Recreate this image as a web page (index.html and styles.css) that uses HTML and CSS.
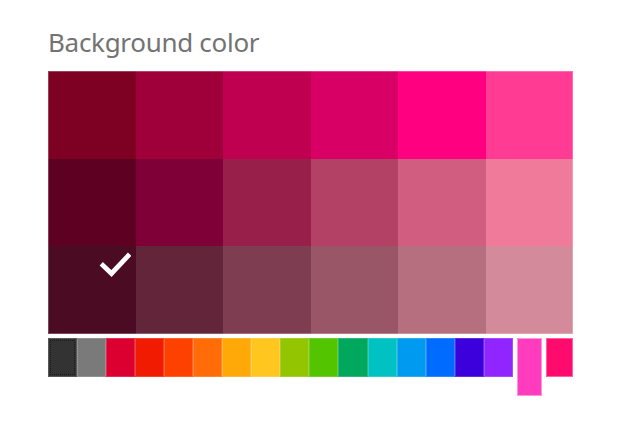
FILE: index.html
```html
<!DOCTYPE html>
<html>
<head>
<meta charset="utf-8">
<link rel="stylesheet" href="styles.css">
</head>
<body>
<div class="panel">
  <div class="title">Background color</div>
  <div class="grid">
    <div class="cell" style="background:#7e0022"></div>
    <div class="cell" style="background:#a0003a"></div>
    <div class="cell" style="background:#bf0050"></div>
    <div class="cell" style="background:#d90065"></div>
    <div class="cell" style="background:#ff0080"></div>
    <div class="cell" style="background:#ff3b93"></div>
    <div class="cell" style="background:#5e0021"></div>
    <div class="cell" style="background:#7e0037"></div>
    <div class="cell" style="background:#991f4b"></div>
    <div class="cell" style="background:#b34065"></div>
    <div class="cell" style="background:#d15e80"></div>
    <div class="cell" style="background:#ef7a9a"></div>
    <div class="cell selected" style="background:#4b0b23">
      <svg class="check" width="32" height="26" viewBox="0 0 32 26"><path d="M4 13.5 L12.5 21.5 L29 4" fill="none" stroke="#fff" stroke-width="4.8" stroke-linecap="square" stroke-linejoin="miter"/></svg>
    </div>
    <div class="cell" style="background:#63253a"></div>
    <div class="cell" style="background:#7f3d51"></div>
    <div class="cell" style="background:#985667"></div>
    <div class="cell" style="background:#b56f7f"></div>
    <div class="cell" style="background:#d38a9b"></div>
  </div>
  <div class="strip">
    <div class="sw focus" style="background:#333333"></div>
    <div class="sw" style="background:#7a7a7a"></div>
    <div class="sw" style="background:#db0030"></div>
    <div class="sw" style="background:#f01b00"></div>
    <div class="sw" style="background:#ff4100"></div>
    <div class="sw" style="background:#ff6c08"></div>
    <div class="sw" style="background:#ffa908"></div>
    <div class="sw" style="background:#ffc61f"></div>
    <div class="sw" style="background:#93c500"></div>
    <div class="sw" style="background:#52c400"></div>
    <div class="sw" style="background:#00a85e"></div>
    <div class="sw" style="background:#00c2c2"></div>
    <div class="sw" style="background:#009bf0"></div>
    <div class="sw" style="background:#006cff"></div>
    <div class="sw" style="background:#3c00dc"></div>
    <div class="sw" style="background:#9125ff"></div>
    <div class="sw active" style="background:#ff3cbe"></div>
    <div class="sw last" style="background:#ff0a6d"></div>
  </div>
</div>
</body>
</html>
```
FILE: styles.css
```css
html, body {
  margin: 0;
  padding: 0;
  background: #ffffff;
}
.panel {
  padding: 26px 0 0 48px;
  width: 525px;
}
.title {
  font-family: "Noto Sans", "Open Sans", sans-serif;
  font-size: 26px;
  line-height: 32px;
  color: #737373;
  height: 32px;
  margin-bottom: 13px;
  letter-spacing: -0.3px;
}
.grid {
  position: relative;
  display: grid;
  grid-template-columns: repeat(6, 1fr);
  grid-template-rows: repeat(3, 1fr);
  width: 525px;
  height: 263px;
}
.grid::after {
  content: "";
  position: absolute;
  inset: 0;
  border: 1px solid rgba(255, 255, 255, 0.25);
  pointer-events: none;
}
.cell {
  position: relative;
}
.check {
  position: absolute;
  left: 51px;
  top: 6px;
}
.strip {
  display: flex;
  align-items: flex-start;
  margin-top: 4px;
  width: 525px;
}
.sw {
  width: 29.06px;
  height: 39px;
  flex: none;
  box-sizing: border-box;
  border: 1px solid rgba(255, 255, 255, 0.18);
}
.sw.focus {
  outline: 1px dotted #1a1a1a;
  outline-offset: -3px;
}
.sw.active {
  width: 25.5px;
  height: 58px;
  margin: 0 4px 0 4px;
  border: 1px solid rgba(255, 255, 255, 0.45);
}
.sw.last {
  width: 27px;
  border: 1px solid rgba(255, 255, 255, 0.35);
}
```
